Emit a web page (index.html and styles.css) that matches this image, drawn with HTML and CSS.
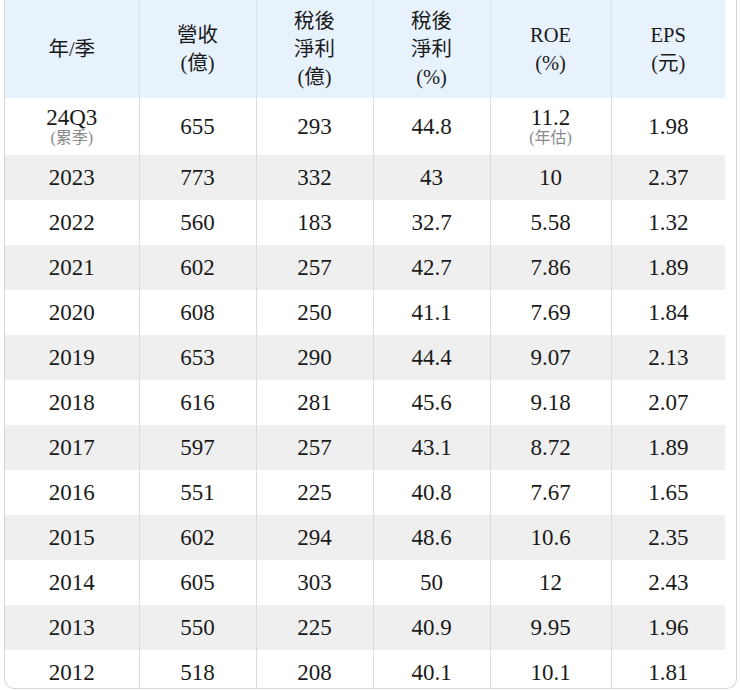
FILE: index.html
```html
<!DOCTYPE html>
<html lang="zh-Hant">
<head>
<meta charset="utf-8">
<title>財務表</title>
<link rel="stylesheet" href="styles.css">
</head>
<body>
<div class="wrap">
  <table class="fin">
    <colgroup>
      <col class="c1"><col class="c2"><col class="c3"><col class="c4"><col class="c5"><col class="c6">
    </colgroup>
    <thead>
      <tr>
        <th>年/季</th>
        <th>營收<br>(億)</th>
        <th>稅後<br>淨利<br>(億)</th>
        <th>稅後<br>淨利<br>(%)</th>
        <th>ROE<br>(%)</th>
        <th>EPS<br>(元)</th>
      </tr>
    </thead>
    <tbody>
      <tr class="first">
        <td><span class="main">24Q3</span><span class="sub">(累季)</span></td>
        <td>655</td><td>293</td><td>44.8</td>
        <td><span class="main">11.2</span><span class="sub">(年估)</span></td>
        <td>1.98</td>
      </tr>
      <tr><td>2023</td><td>773</td><td>332</td><td>43</td><td>10</td><td>2.37</td></tr>
      <tr><td>2022</td><td>560</td><td>183</td><td>32.7</td><td>5.58</td><td>1.32</td></tr>
      <tr><td>2021</td><td>602</td><td>257</td><td>42.7</td><td>7.86</td><td>1.89</td></tr>
      <tr><td>2020</td><td>608</td><td>250</td><td>41.1</td><td>7.69</td><td>1.84</td></tr>
      <tr><td>2019</td><td>653</td><td>290</td><td>44.4</td><td>9.07</td><td>2.13</td></tr>
      <tr><td>2018</td><td>616</td><td>281</td><td>45.6</td><td>9.18</td><td>2.07</td></tr>
      <tr><td>2017</td><td>597</td><td>257</td><td>43.1</td><td>8.72</td><td>1.89</td></tr>
      <tr><td>2016</td><td>551</td><td>225</td><td>40.8</td><td>7.67</td><td>1.65</td></tr>
      <tr><td>2015</td><td>602</td><td>294</td><td>48.6</td><td>10.6</td><td>2.35</td></tr>
      <tr><td>2014</td><td>605</td><td>303</td><td>50</td><td>12</td><td>2.43</td></tr>
      <tr><td>2013</td><td>550</td><td>225</td><td>40.9</td><td>9.95</td><td>1.96</td></tr>
      <tr><td>2012</td><td>518</td><td>208</td><td>40.1</td><td>10.1</td><td>1.81</td></tr>
    </tbody>
  </table>
</div>
</body>
</html>
```
FILE: styles.css
```css
html, body {
  margin: 0;
  padding: 0;
  background: #ffffff;
}

body {
  font-family: "Liberation Serif", "Noto Sans CJK TC", serif;
  color: #1a1a1a;
}

.wrap {
  margin-left: 4px;
  width: 731px;
  height: 688px;
  border: 1px solid #d6d6d6;
  border-top: none;
  border-radius: 0 0 10px 10px;
  overflow: hidden;
  background: #fff;
}

.fin {
  width: 720px;
  table-layout: fixed;
  border-collapse: collapse;
  border-spacing: 0;
}

.c1 { width: 134px; }
.c2 { width: 117px; }
.c3 { width: 117px; }
.c4 { width: 117px; }
.c5 { width: 121px; }
.c6 { width: 114px; }

.fin th {
  background: #e7f2fd;
  font-weight: normal;
  font-size: 20.5px;
  line-height: 28px;
  height: 98px;
  padding: 0;
  text-align: center;
  vertical-align: middle;
  border-left: 1px solid #d7e2ec;
  box-sizing: border-box;
}

.fin td {
  font-size: 23px;
  line-height: 26px;
  height: 45px;
  padding: 0;
  text-align: center;
  vertical-align: middle;
  border-left: 1px solid #dcdcdc;
  box-sizing: border-box;
}

.fin th:first-child,
.fin td:first-child {
  border-left: none;
}

.fin tbody tr:nth-child(even) td {
  background: #efefef;
}

.fin tr.first td {
  height: 57px;
}

.main {
  display: block;
  line-height: 22px;
}

.sub {
  display: block;
  font-size: 16px;
  line-height: 18px;
  color: #8a8a8a;
}
```
